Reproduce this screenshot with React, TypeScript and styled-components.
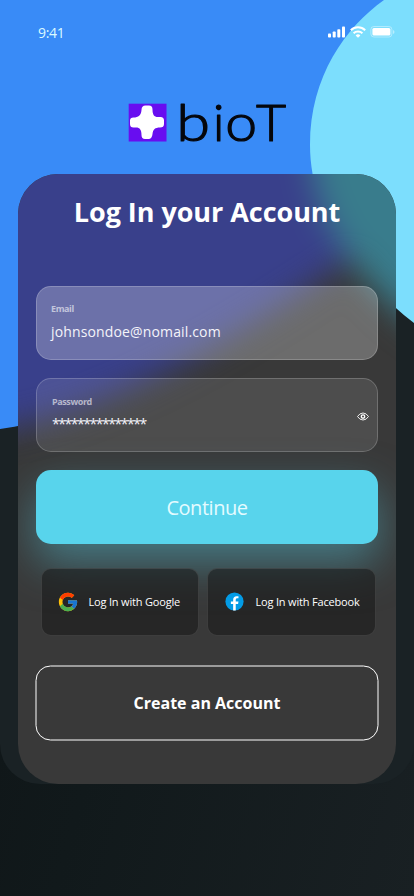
import React from 'react';
import styled, { createGlobalStyle } from 'styled-components';
import { FcGoogle } from 'react-icons/fc';

const GlobalStyle = createGlobalStyle`
  *, *::before, *::after { box-sizing: border-box; }
  body { margin: 0; background: #11181a; }
  button, input { font: inherit; }
`;

const Screen = styled.div`
  width: 414px;
  height: 896px;
  overflow: hidden;
  font-family: 'Open Sans', 'Noto Sans', sans-serif;
  color: #fff;
  background: linear-gradient(105deg, #0e1315 0%, #11191b 45%, #192023 100%);
`;

const Panel = styled.main`
  position: relative;
  isolation: isolate;
  height: 784px;
  border-radius: 0 0 40px 40px;
  overflow: hidden;
  background: #1a2225;
  display: flex;
  flex-direction: column;
`;

const Backdrop = styled.svg`
  position: absolute;
  inset: 0;
  z-index: -1;
`;

const StatusBar = styled.header`
  height: 64px;
  padding: 2px 19px 0 38px;
  display: flex;
  align-items: center;
  justify-content: space-between;
`;

const Clock = styled.time`
  font-size: 14px;
  line-height: 20px;
  letter-spacing: -0.35px;
  color: #dcfaff;
`;

const StatusIcons = styled.svg`
  display: block;
  margin-top: -3px;
`;

const Brand = styled.div`
  height: 110px;
  padding: 34px 0 0 126px;
`;

const Wordmark = styled.text`
  font-family: Lato, sans-serif;
  font-weight: 300;
  font-size: 51px;
  fill: #05070d;
  stroke: #05070d;
  stroke-width: 1.2px;
  stroke-linejoin: round;
`;

const Card = styled.section`
  position: relative;
  isolation: isolate;
  width: 378px;
  height: 610px;
  margin: 0 auto;
  padding: 0 18px;
  border-radius: 40px;
  overflow: hidden;
  background: #393939;
  display: flex;
  flex-direction: column;
`;

const Title = styled.h1`
  margin: 19px 0 55px;
  height: 38px;
  line-height: 38px;
  font-size: 27px;
  font-weight: 700;
  letter-spacing: -0.05px;
  text-align: center;
  white-space: nowrap;
`;

const Field = styled.label<{ $fill: number; $inset: number }>`
  flex: none;
  height: 74px;
  margin-bottom: 18px;
  padding: 0 8px 1px ${(p) => p.$inset}px;
  border: 1px solid rgba(255, 255, 255, 0.2);
  border-radius: 15px;
  background: rgba(255, 255, 255, ${(p) => p.$fill});
  display: flex;
  align-items: center;
  justify-content: space-between;
`;

const FieldText = styled.span<{ $gap: number }>`
  display: flex;
  flex-direction: column;
  gap: ${(p) => p.$gap}px;
`;

const FieldLabel = styled.span`
  font-size: 9px;
  line-height: 12px;
  font-weight: 700;
  letter-spacing: -0.4px;
  color: rgba(255, 255, 255, 0.6);
`;

const FieldValue = styled.span<{ $spacing: number }>`
  font-size: 14px;
  line-height: 20px;
  letter-spacing: ${(p) => p.$spacing}px;
  color: #f4f4fa;
  white-space: nowrap;
`;

const PrimaryButton = styled.button`
  flex: none;
  height: 74px;
  padding: 0;
  border: 0;
  border-radius: 15px;
  background: #58d4ec;
  color: #e4fbff;
  font-size: 20px;
  letter-spacing: -0.45px;
  box-shadow: 0 19px 44px rgba(82, 180, 198, 0.53);
`;

const SocialRow = styled.div`
  display: grid;
  grid-template-columns: 158px 169px;
  gap: 8px;
  margin: 24px 0 29px 5px;
`;

const SocialButton = styled.button`
  height: 68px;
  padding: 0 0 1px 15px;
  border: 1px solid rgba(255, 255, 255, 0.11);
  border-radius: 10px;
  background: rgba(22, 22, 22, 0.54);
  color: #fff;
  display: flex;
  align-items: center;
  gap: 9.5px;
  font-size: 11px;
  letter-spacing: -0.18px;
  white-space: nowrap;
`;

const OutlineButton = styled.button`
  position: relative;
  flex: none;
  height: 76px;
  margin: 0 -1px;
  padding: 0;
  border: 0;
  background: transparent;
  color: #fff;
  font-size: 16px;
  font-weight: 700;
  letter-spacing: 0;

  &::after {
    content: '';
    position: absolute;
    top: 0;
    left: 0;
    width: 343px;
    height: 75px;
    border: 1px solid #fff;
    border-radius: 15px;
    transform: translate(0.5px, 0.5px);
  }
`;

const BLUE_SHAPE = 'M-80 -80H414V215L370 245C250 330 110 413 0 429L-80 436Z';
const CYAN_SHAPE = 'M384 0C346 27 310 76 310 145C310 212 352 275 414 323L480 370V-80Z';

function Logo() {
  return (
    <svg width="164" height="50" viewBox="126 98 164 50" overflow="visible" role="img" aria-label="bioT">
      <rect x="128.7" y="103.7" width="37.8" height="37.8" fill="#680df0" />
      <path
        d="M145.500 105.500h3.500q3.500 0 3.500 4c0 5 1.500 7.500 5.500 7.500h2.500q3.500 0 3.500 3.500v3.500q0 3.500-4 3.500c-5 0-7 2-7.500 6.500q-.5 5-4 5h-3.500q-3.500 0-3.500-4c0-5-1.500-7.500-5.500-7.500h-2.500q-3.500 0-3.500-3.500v-3.500q0-3 3.500-3c5 0 7.500-2 8-7.500q0-4.500 4-4.500Z"
        fill="#fff"
      />
      <Wordmark transform="translate(176.200 141) scale(1.2 1)">b</Wordmark>
      <Wordmark x="213" y="141">i</Wordmark>
      <Wordmark transform="translate(225.200 141) scale(1.12 1)">o</Wordmark>
      <Wordmark transform="translate(256 141) scale(1.02 1)">T</Wordmark>
    </svg>
  );
}

function DeviceIcons() {
  return (
    <StatusIcons width="67" height="14" viewBox="0 0 67 14" fill="#fff">
      <rect x="0" y="8.500" width="3" height="4" rx=".8" />
      <rect x="4.700" y="6.500" width="3" height="6" rx=".8" />
      <rect x="9.300" y="4.200" width="3" height="8.300" rx=".8" />
      <rect x="14" y="1.500" width="3" height="11" rx=".8" />
      <g fill="none" stroke="#fff" strokeWidth="2">
        <path d="M22.800 5.300a10.300 10.300 0 0 1 14.400 0" />
        <path d="M25.600 8.200a6.400 6.400 0 0 1 8.800 0" />
      </g>
      <path d="M27.600 10.400a3.600 3.600 0 0 1 4.800 0L30 12.800Z" />
      <rect x="42.900" y="1.500" width="21" height="10.500" rx="3" fill="none" stroke="#fff" strokeOpacity=".4" />
      <rect x="44.400" y="3" width="18" height="7.500" rx="1.500" />
      <path d="M65 5v4q1.500-.6 1.500-2T65 5Z" opacity=".45" />
    </StatusIcons>
  );
}

const Eye = styled.svg`
  margin-top: 3px;
`;

function EyeIcon() {
  return (
    <Eye width="12" height="9" viewBox="0 0 12 9" fill="none" stroke="#fff">
      <path d="M.5 4.500Q2.700 1 6 1T11.500 4.500Q9.300 8 6 8T.5 4.500Z" strokeWidth=".9" />
      <circle cx="6" cy="4.500" r="1.700" strokeWidth="1.300" />
    </Eye>
  );
}

function FacebookIcon() {
  return (
    <svg width="23" height="23" viewBox="0 0 48 48">
      <circle cx="24" cy="24" r="19" fill="#039be5" />
      <path
        fill="#fff"
        d="M26.572 29.036h4.917l.772-4.995h-5.690v-2.730c0-2.075.678-3.915 2.619-3.915h3.119v-4.359c-.548-.074-1.707-.236-3.897-.236-4.573 0-7.254 2.415-7.254 7.917v3.323h-4.701v4.995h4.701v13.729c.931.140 1.874.235 2.842.235.875 0 1.729-.080 2.572-.194V29.036z"
      />
    </svg>
  );
}

export default function App() {
  return (
    <>
      <GlobalStyle />
      <Screen>
        <Panel>
          <Backdrop width="414" height="784" viewBox="0 0 414 784">
            <path d={BLUE_SHAPE} fill="#398bf7" />
            <path d={CYAN_SHAPE} fill="#7cdefd" />
          </Backdrop>

          <StatusBar>
            <Clock>9:41</Clock>
            <DeviceIcons />
          </StatusBar>

          <Brand>
            <Logo />
          </Brand>

          <Card>
            <Backdrop width="378" height="610" viewBox="18 174 378 610">
              <defs>
                <filter id="frost" filterUnits="userSpaceOnUse" x="-80" y="-80" width="620" height="700" colorInterpolationFilters="sRGB">
                  <feGaussianBlur stdDeviation="16" />
                </filter>
              </defs>
              <g filter="url(#frost)">
                <path d={BLUE_SHAPE} fill="#39408b" />
                <path d={CYAN_SHAPE} fill="#397c8c" />
              </g>
            </Backdrop>

            <Title>Log In your Account</Title>

            <Field $fill={0.26} $inset={14}>
              <FieldText $gap={7}>
                <FieldLabel>Email</FieldLabel>
                <FieldValue $spacing={0.14}>johnsondoe@nomail.com</FieldValue>
              </FieldText>
            </Field>

            <Field $fill={0.1} $inset={15}>
              <FieldText $gap={6}>
                <FieldLabel>Password</FieldLabel>
                <FieldValue $spacing={-1.46}>***************</FieldValue>
              </FieldText>
              <EyeIcon />
            </Field>

            <PrimaryButton>Continue</PrimaryButton>

            <SocialRow>
              <SocialButton>
                <FcGoogle size={22} />
                Log In with Google
              </SocialButton>
              <SocialButton>
                <FacebookIcon />
                Log In with Facebook
              </SocialButton>
            </SocialRow>

            <OutlineButton>Create an Account</OutlineButton>
          </Card>
        </Panel>
      </Screen>
    </>
  );
}
